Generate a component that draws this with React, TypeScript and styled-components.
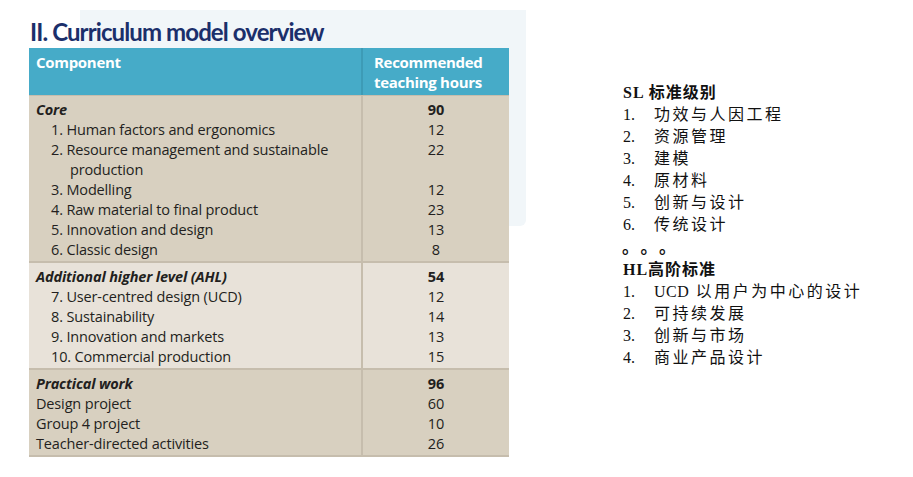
import styled, { createGlobalStyle } from 'styled-components'

type Row = { label: string; hours?: number; kind: 'head' | 'item' | 'plain' | 'wrap' }

type Section = { tone: 'dark' | 'light'; rows: Row[] }

const SECTIONS: Section[] = [
	{
		tone: 'dark',
		rows: [
			{ label: 'Core', hours: 90, kind: 'head' },
			{ label: '1. Human factors and ergonomics', hours: 12, kind: 'item' },
			{ label: '2. Resource management and sustainable', hours: 22, kind: 'item' },
			{ label: 'production', kind: 'wrap' },
			{ label: '3. Modelling', hours: 12, kind: 'item' },
			{ label: '4. Raw material to final product', hours: 23, kind: 'item' },
			{ label: '5. Innovation and design', hours: 13, kind: 'item' },
			{ label: '6. Classic design', hours: 8, kind: 'item' }
		]
	},
	{
		tone: 'light',
		rows: [
			{ label: 'Additional higher level (AHL)', hours: 54, kind: 'head' },
			{ label: '7. User-centred design (UCD)', hours: 12, kind: 'item' },
			{ label: '8. Sustainability', hours: 14, kind: 'item' },
			{ label: '9. Innovation and markets', hours: 13, kind: 'item' },
			{ label: '10. Commercial production', hours: 15, kind: 'item' }
		]
	},
	{
		tone: 'dark',
		rows: [
			{ label: 'Practical work', hours: 96, kind: 'head' },
			{ label: 'Design project', hours: 60, kind: 'plain' },
			{ label: 'Group 4 project', hours: 10, kind: 'plain' },
			{ label: 'Teacher-directed activities', hours: 26, kind: 'plain' }
		]
	}
]

const SL = ['功效与人因工程', '资源管理', '建模', '原材料', '创新与设计', '传统设计']
const HL = ['UCD 以用户为中心的设计', '可持续发展', '创新与市场', '商业产品设计']

const App = () => {
	return (
		<>
			<GlobalStyle />
			<Page>
				<Overview>
					<Backdrop />
					<Title>II. Curriculum model overview</Title>
					<Table>
						<HeadRow>
							<HeadCell>Component</HeadCell>
							<HeadCell>
								Recommended
								<br />
								teaching hours
							</HeadCell>
						</HeadRow>
						{SECTIONS.map((section, i) => (
							<SectionBlock key={i} $tone={section.tone}>
								<Labels>
									{section.rows.map((row) => (
										<Label key={row.label} $kind={row.kind}>
											{row.label}
										</Label>
									))}
								</Labels>
								<Hours>
									{section.rows.map((row) => (
										<Hour key={row.label} $bold={row.kind === 'head'}>
											{row.hours ?? '\u00a0'}
										</Hour>
									))}
								</Hours>
							</SectionBlock>
						))}
					</Table>
				</Overview>

				<Notes>
					<NoteTitle>SL 标准级别</NoteTitle>
					<List>
						{SL.map((text, i) => (
							<ListItem key={text}>
								<Num>{i + 1}.</Num>
								<span>{text}</span>
							</ListItem>
						))}
					</List>
					<Dots>。。。</Dots>
					<NoteTitle>HL高阶标准</NoteTitle>
					<List>
						{HL.map((text, i) => (
							<ListItem key={text}>
								<Num>{i + 1}.</Num>
								<span>
									{text.startsWith('UCD') ? (
										<>
											<Latin>UCD</Latin>
											{text.slice(3)}
										</>
									) : (
										text
									)}
								</span>
							</ListItem>
						))}
					</List>
				</Notes>
			</Page>
		</>
	)
}

const GlobalStyle = createGlobalStyle`
	html, body {
		margin: 0;
		padding: 0;
		background: #ffffff;
	}
`

const Page = styled.div`
	display: flex;
	align-items: flex-start;
	width: 913px;
	height: 477px;
	overflow: hidden;
`

const Overview = styled.div`
	position: relative;
	width: 480px;
	padding: 19px 0 0 29px;
	flex-shrink: 0;
`

const Backdrop = styled.div`
	position: absolute;
	left: 80px;
	top: 10px;
	width: 446px;
	height: 216px;
	background: #f1f6f9;
	border-radius: 0 0 6px 0;
	z-index: 0;
`

const Title = styled.h1`
	position: relative;
	margin: 0 0 3px 1px;
	font-family: Lato, 'Open Sans', sans-serif;
	font-weight: 700;
	font-size: 24px;
	line-height: 26px;
	letter-spacing: -0.9px;
	color: #1b2f6b;
`

const Table = styled.div`
	position: relative;
	width: 480px;
	font-family: 'Open Sans', sans-serif;
	font-size: 14.5px;
	color: #231f20;
	border-bottom: 2px solid #c6bdad;
`

const HeadRow = styled.div`
	display: grid;
	grid-template-columns: 332px 148px;
	height: 47px;
	background: #46abc8;
	border-bottom: 1px solid #c6bdad;
`

const HeadCell = styled.div`
	padding: 4px 0 0 7px;
	font-weight: 700;
	font-size: 15px;
	line-height: 20px;
	letter-spacing: -0.3px;
	color: #ffffff;

	& + & {
		border-left: 2px solid #3d9bb6;
		padding-left: 11px;
	}
`

const SectionBlock = styled.div<{ $tone: 'dark' | 'light' }>`
	display: grid;
	grid-template-columns: 332px 148px;
	background: ${({ $tone }) => ($tone === 'dark' ? '#d8d0c0' : '#e8e2d9')};
	padding: 4px 0 1px;

	& + & {
		border-top: 2px solid #c6bdad;
	}
`

const Labels = styled.div`
	display: flex;
	flex-direction: column;
	padding-left: 7px;
`

const Label = styled.div<{ $kind: Row['kind'] }>`
	height: 20px;
	line-height: 20px;
	white-space: nowrap;
	letter-spacing: -0.15px;
	padding-left: ${({ $kind }) => ($kind === 'item' ? 15 : $kind === 'wrap' ? 34 : 0)}px;
	font-weight: ${({ $kind }) => ($kind === 'head' ? 700 : 400)};
	font-style: ${({ $kind }) => ($kind === 'head' ? 'italic' : 'normal')};
`

const Hours = styled.div`
	display: flex;
	flex-direction: column;
	align-items: center;
	margin: -4px 0 -1px;
	padding: 4px 0 1px;
	border-left: 2px solid #c6bdad;
`

const Hour = styled.div<{ $bold: boolean }>`
	height: 20px;
	line-height: 20px;
	font-weight: ${({ $bold }) => ($bold ? 700 : 400)};
`

const Notes = styled.div`
	margin: 82px 0 0 114px;
	font-family: 'Liberation Serif', 'Noto Sans CJK SC', serif;
	font-size: 16px;
	color: #111111;
`

const NoteTitle = styled.div`
	font-weight: 700;
	line-height: 22px;
	letter-spacing: 1px;
`

const List = styled.div`
	display: flex;
	flex-direction: column;
`

const ListItem = styled.div`
	display: grid;
	grid-template-columns: 31px auto;
	line-height: 22px;
	letter-spacing: 2.5px;
`

const Num = styled.span`
	letter-spacing: 0;
`

const Latin = styled.span`
	letter-spacing: 0.5px;
`

const Dots = styled.div`
	font-weight: 700;
	font-size: 17px;
	line-height: 23px;
	letter-spacing: 10px;
	margin-left: -1px;
`

export default App
